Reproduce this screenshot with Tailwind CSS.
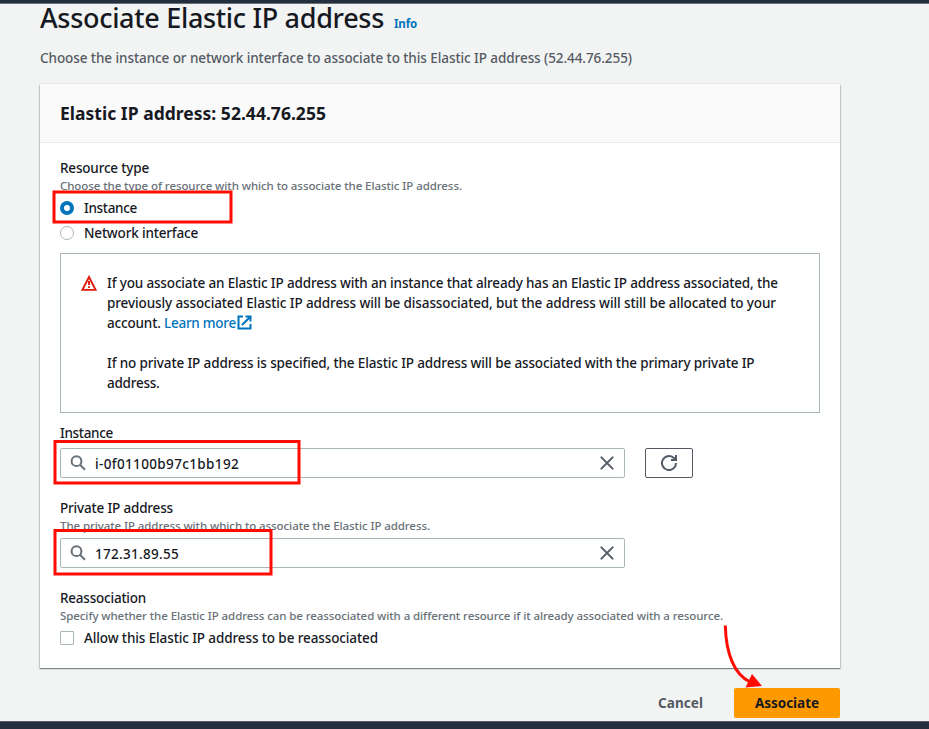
<!DOCTYPE html>
<html lang="en">
<head>
<meta charset="utf-8">
<title>Associate Elastic IP address</title>
<script src="https://cdn.jsdelivr.net/npm/@tailwindcss/browser@4"></script>
</head>
<body class="relative flex h-[729px] w-[929px] flex-col overflow-hidden bg-[#f2f3f3] font-['Noto_Sans','Open_Sans',sans-serif] text-[13.5px] leading-5 font-medium text-[#16191f]">
<div class="h-1 shrink-0 border-b border-[#687078] bg-[#232f3e]"></div>

<main class="ml-10 flex h-[717px] w-[800px] shrink-0 flex-col whitespace-nowrap">
  <header class="h-20 shrink-0">
    <div class="flex h-[32px] items-baseline">
      <h1 class="text-[27px] leading-[28px] font-medium tracking-[-0.31px]">Associate Elastic IP address</h1>
      <a class="ml-[10px] text-[11.5px] font-bold tracking-[-0.14px] text-[#0073bb]">Info</a>
    </div>
    <p class="mt-3 tracking-[-0.074px] text-[#545b64]">Choose the instance or network interface to associate to this Elastic IP address (52.44.76.255)</p>
  </header>

  <section class="h-[584px] shrink-0 bg-white shadow-[0_1px_1px_0_rgba(0,28,36,0.3),1px_1px_1px_0_rgba(0,28,36,0.15),-1px_1px_1px_0_rgba(0,28,36,0.15),0_-1px_0_0_#e6e9e9]">
    <div class="flex h-[59px] items-center border-b border-[#eaeded] bg-[#fafafa] px-5">
      <h2 class="text-[17.5px] font-bold tracking-[0.02px]">Elastic IP address: 52.44.76.255</h2>
    </div>
    <div class="px-5 pt-[15px]">
      <div class="tracking-[-0.18px]">Resource type</div>
      <p class="text-[11.5px] leading-4 tracking-[-0.076px] text-[#687078]">Choose the type of resource with which to associate the Elastic IP address.</p>
      <div class="mt-1 flex items-center gap-[10px]">
        <span class="size-[14px] rounded-full border-[4px] border-[#0073bb] bg-white"></span>
        <span class="tracking-[-0.32px]">Instance</span>
      </div>
      <div class="mt-[5px] flex items-center gap-[10px]">
        <span class="size-[14px] rounded-full border border-[#aab7b8] bg-white"></span>
        <span class="tracking-[-0.175px]">Network interface</span>
      </div>

      <div class="mt-[10px] flex h-40 border border-[#aab7b8] pt-[19px] pl-5">
        <svg class="mt-[2px] mr-[10px] size-4 shrink-0" viewBox="0 0 16 16" fill="none" stroke="#df1b0c" stroke-width="1.9"><path d="M8 2 14.6 14.9H1.4Z"/><path d="M8 6v4M8 11.2v1.8"/></svg>
        <div>
          <p class="tracking-[-0.152px]">If you associate an Elastic IP address with an instance that already has an Elastic IP address associated, the</p>
          <p class="tracking-[-0.105px]">previously associated Elastic IP address will be disassociated, but the address will still be allocated to your</p>
          <p class="flex items-center tracking-[-0.17px]"><span class="whitespace-pre">account. </span><a class="flex items-center tracking-[-0.26px] text-[#0073bb]">Learn more<svg class="mb-px ml-px size-[15px]" viewBox="0 0 15 15" fill="none" stroke="#0073bb" stroke-width="2"><path d="M6 1.5H1.5v12h12V9M8.5 1.5h5v5M13.3 1.7 5 10"/></svg></a></p>
          <p class="mt-5 tracking-[-0.132px]">If no private IP address is specified, the Elastic IP address will be associated with the primary private IP</p>
          <p class="tracking-[-0.25px]">address.</p>
        </div>
      </div>

      <div class="mt-[10px] tracking-[-0.32px]">Instance</div>
      <div class="mt-[5px] flex gap-5">
        <div class="flex h-[30px] w-[565px] items-center rounded-[2px] border border-[#aab7b8] pr-[10px] pl-[9px]">
          <svg class="size-4" viewBox="0 0 16 16" fill="none" stroke="#687078" stroke-width="2"><circle cx="6.5" cy="6.2" r="4.9"/><path d="m10 9.7 5 5"/></svg>
          <span class="ml-[9px] flex-1 pt-[2px] tracking-[0.36px]">i-0f01100b97c1bb192</span>
          <svg class="size-[14px]" viewBox="0 0 14 14" fill="none" stroke="#545b64" stroke-width="2" stroke-linecap="round"><path d="m1.4 1.4 11.2 11.2M12.6 1.4 1.4 12.6"/></svg>
        </div>
        <button class="flex h-[30px] w-12 items-center justify-center rounded-[2px] border border-[#545b64] bg-white">
          <svg class="size-4" viewBox="0 0 16 16" fill="none" stroke="#545b64" stroke-width="2"><path d="M15 8a7 7 0 1 1-2.4-5.2L15 5"/><path d="M10 5h5V0"/></svg>
        </button>
      </div>

      <div class="mt-5 tracking-[-0.18px]">Private IP address</div>
      <p class="text-[11.5px] leading-4 tracking-[-0.083px] text-[#687078]">The private IP address with which to associate the Elastic IP address.</p>
      <div class="mt-1 flex h-[30px] w-[565px] items-center rounded-[2px] border border-[#aab7b8] pr-[10px] pl-[9px]">
        <svg class="size-4" viewBox="0 0 16 16" fill="none" stroke="#687078" stroke-width="2"><circle cx="6.5" cy="6.2" r="4.9"/><path d="m10 9.7 5 5"/></svg>
        <span class="ml-[9px] flex-1 pt-[2px] tracking-[0.29px]">172.31.89.55</span>
        <svg class="size-[14px]" viewBox="0 0 14 14" fill="none" stroke="#545b64" stroke-width="2" stroke-linecap="round"><path d="m1.4 1.4 11.2 11.2M12.6 1.4 1.4 12.6"/></svg>
      </div>

      <div class="mt-5 tracking-[-0.22px]">Reassociation</div>
      <p class="text-[11.5px] leading-4 tracking-[-0.085px] text-[#687078]">Specify whether the Elastic IP address can be reassociated with a different resource if it already associated with a resource.</p>
      <div class="mt-1 flex items-center gap-[10px]">
        <span class="size-[14px] rounded-[1px] border border-[#aab7b8] bg-white"></span>
        <span class="tracking-[-0.11px]">Allow this Elastic IP address to be reassociated</span>
      </div>
    </div>
  </section>

  <footer class="mt-5 flex h-[30px] shrink-0 items-center justify-end font-bold">
    <button class="mr-[31px] tracking-[0.07px] text-[#545b64]">Cancel</button>
    <button class="h-[30px] w-[106px] rounded-[2px] bg-[#ff9900] tracking-[-0.04px]">Associate</button>
  </footer>
</main>
<div class="h-2 shrink-0 border-t border-[#545b64] bg-[#232f3e]"></div>

<!-- Annotation overlay: highlight frames and arrow -->
<svg class="pointer-events-none absolute inset-0" width="929" height="729" fill="none" stroke="#ff0b00" stroke-width="3">
  <rect x="54" y="192" width="177" height="30"/>
  <rect x="55" y="441.5" width="244" height="41.5"/>
  <rect x="55" y="530.5" width="216" height="43.5"/>
  <path d="M725.3 625.5C726 655 735 675 750 682"/>
  <path d="M752 674 762 686 745.5 687.5Z" fill="#ff0b00" stroke="none"/>
</svg>
</body>
</html>
